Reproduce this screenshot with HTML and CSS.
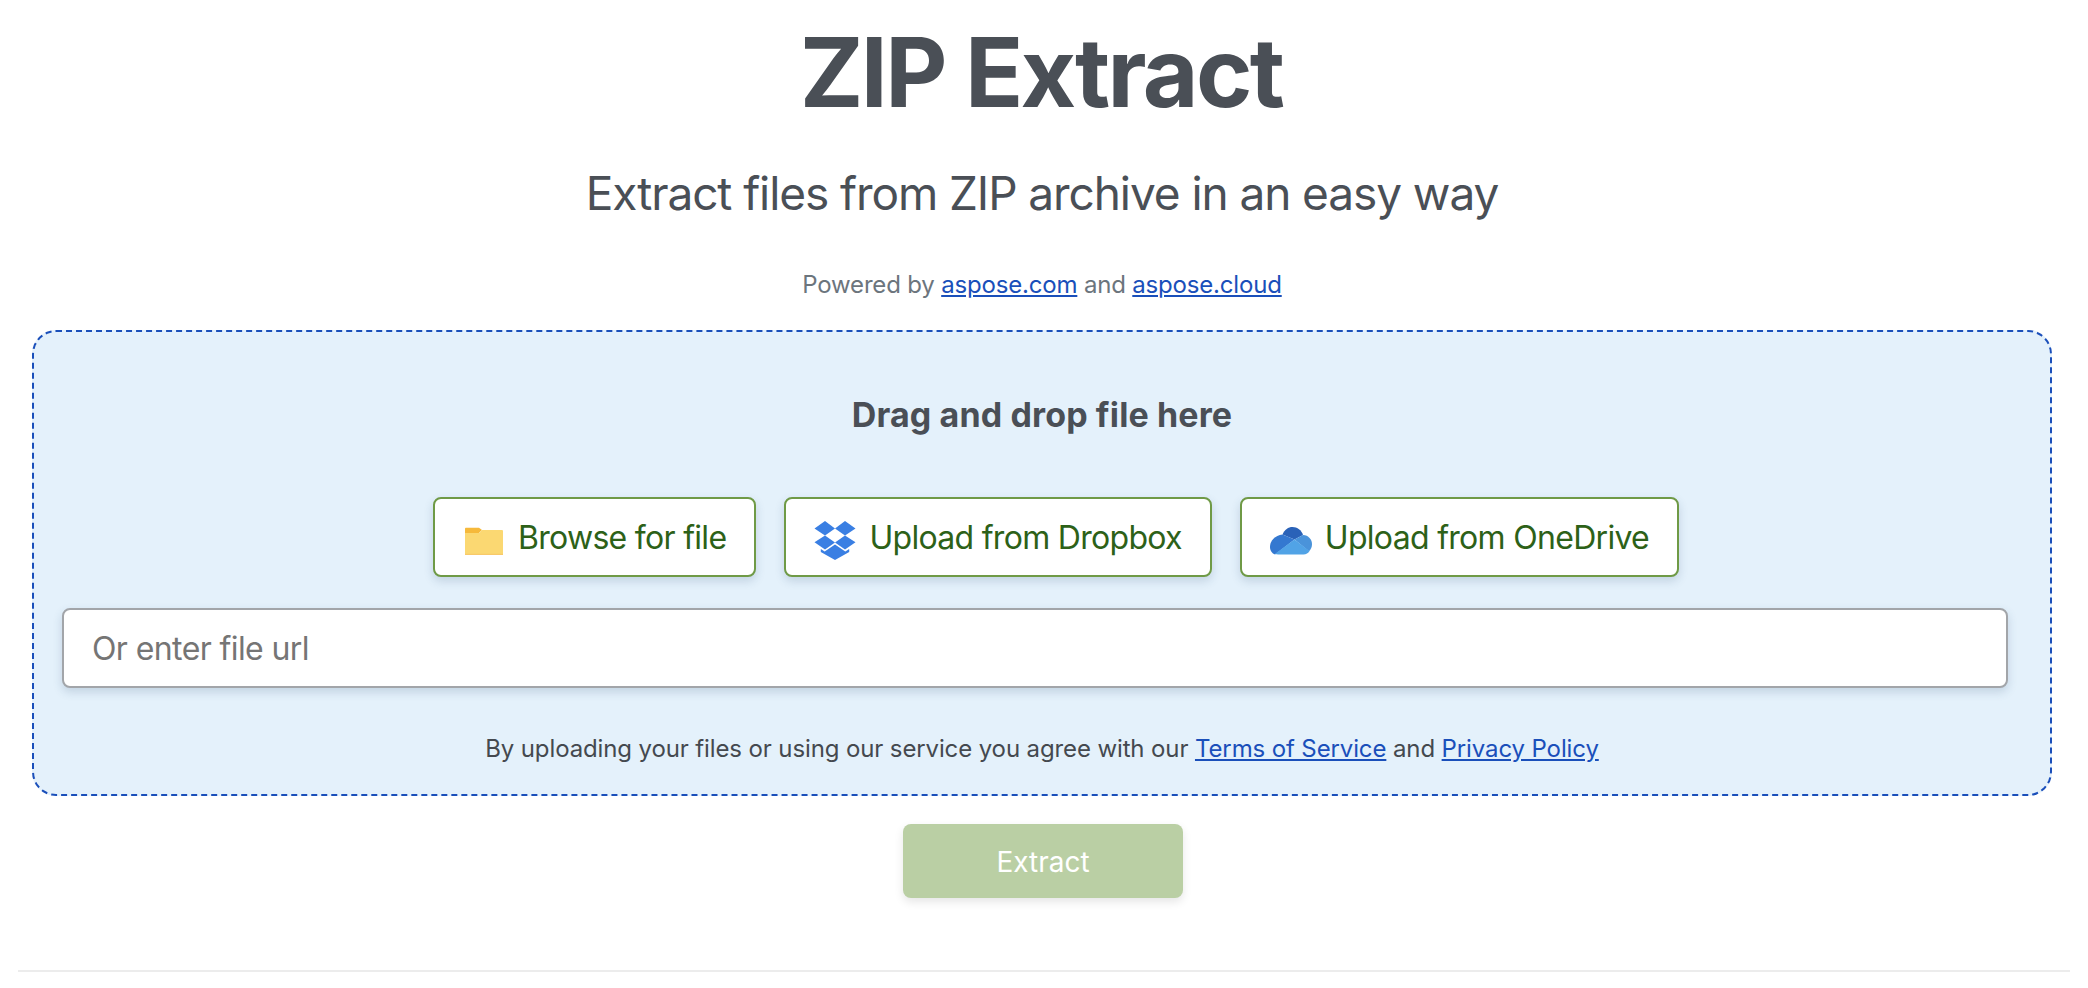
FILE: index.html
```html
<!DOCTYPE html>
<html lang="en">
<head>
<meta charset="utf-8">
<title>ZIP Extract</title>
<link rel="stylesheet" href="styles.css">
</head>
<body>
<main class="page">
  <header class="head">
    <h1 class="title">ZIP Extract</h1>
    <h2 class="subtitle">Extract files from ZIP archive in an easy way</h2>
    <p class="powered">Powered by <a href="#">aspose.com</a> and <a href="#">aspose.cloud</a></p>
  </header>
  <section class="drop">
    <h3 class="drop-title">Drag and drop file here</h3>
    <div class="sources">
      <button class="source" type="button">
        <svg class="icon" viewBox="0 -5 42 42" aria-hidden="true">
          <path fill="#f6b93b" d="M2 7.500a.8.8 0 0 1 .8-.8h13.200l3 2.300-3 3H2z"/>
          <path fill="#fbd872" d="M2 12h14.500l2.500-3h20a1 1 0 0 1 1 1v23H2z"/>
          <path fill="#f8c96a" d="M2 32.700h38v1.300H2z"/>
        </svg>
        <span>Browse for file</span>
      </button>
      <button class="source" type="button">
        <svg class="icon" viewBox="0 -3 42 42" aria-hidden="true">
          <path fill="#3a7fe3" d="M11 2 .5 9.400 11 16.400l10-7zM31 2 21 9.400l10 7 10.500-7zM.5 23.200 11 30.400l10-7-10-7zM31 16.400l-10 7 10 7 10.500-7.200zM21 25.400l-10.300 7.200-3.900-2.500v3L21 41l14.200-7.900v-3l-3.900 2.500z"/>
        </svg>
        <span>Upload from Dropbox</span>
      </button>
      <button class="source" type="button">
        <svg class="icon" viewBox="0 -4 42 42" aria-hidden="true">
          <path fill="#2a62b8" d="M12.500 14.500C14.500 9.600 18.300 7 22.500 7c4.800 0 9 3 10.500 8l-8.500 4.600-12-5.100z"/>
          <path fill="#3478d0" d="M0 27c0-6.500 5-11.500 12.500-12.500l12 5.100L5 34.500C2 33.500 0 30.500 0 27z"/>
          <path fill="#4a93da" d="M24.500 19.600 33 15c5.500.2 9 4.500 9 9 0 3-1 5.500-3 7.300z"/>
          <path fill="#51a3e6" d="M24.500 19.600 39.500 31c-1.300 2-3.300 3.500-6 3.500H9c-1.500 0-3-.2-4-.8z"/>
        </svg>
        <span>Upload from OneDrive</span>
      </button>
    </div>
    <input class="url" type="text" placeholder="Or enter file url">
    <p class="terms">By uploading your files or using our service you agree with our <a href="#">Terms of Service</a> and <a href="#">Privacy Policy</a></p>
  </section>
  <div class="action">
    <button class="extract" type="button">Extract</button>
  </div>
  <hr class="rule">
</main>
</body>
</html>
```

FILE: styles.css
```css
* { box-sizing: border-box; }
html, body { margin: 0; padding: 0; background: #fff; }
body { font-family: Inter, "Liberation Sans", sans-serif; color: #4a4f56; overflow: hidden; }
.page { padding: 0 36px 0 32px; height: 988px; }
.head { text-align: center; }
.title { margin: 0 2px 0 0; padding-top: 14px; font-size: 96px; line-height: 116px; font-weight: 700; letter-spacing: -2.6px; color: #4a4f56; }
.subtitle { margin: 35px 0 0; font-size: 46px; line-height: 56px; font-weight: 400; letter-spacing: -1.08px; color: #4a4f56; }
.powered { margin: 46px 0 0; font-size: 24px; line-height: 36px; letter-spacing: -.18px; color: #6c757d; }
a { color: #1a4fba; text-decoration: underline; }
.drop { margin-top: 27px; height: 466px; padding: 59px 28px 0; background: #e4f1fb; border: 2px dashed #1a4fba; border-radius: 24px; text-align: center; }
.drop-title { margin: 0; font-size: 34px; line-height: 48px; font-weight: 700; letter-spacing: .12px; color: #4a4f56; }
.sources { display: flex; justify-content: center; gap: 28px; margin: 58px -28px 0 0; }
.source { display: flex; align-items: center; gap: 13px; height: 80px; padding: 0 28px; background: #fff; border: 2px solid #6f9a46; border-radius: 8px; color: #2d6118; font: 400 32px Inter, sans-serif; letter-spacing: -.7px; box-shadow: 0 4px 10px rgba(40, 70, 110, .18); }
.icon { width: 42px; height: 42px; flex: none; overflow: visible; }
.url { display: block; width: calc(100% - 14px); height: 80px; margin-top: 31px; padding: 0 28px; background: #fff; border: 2px solid #a2a5a9; border-radius: 8px; font: 400 32px Inter, sans-serif; letter-spacing: -.6px; color: #333; box-shadow: 0 4px 10px rgba(40, 70, 110, .18); outline: none; }
.url::placeholder { color: #757575; opacity: 1; }
.terms { margin: 43px 0 0; font-size: 24px; line-height: 36px; letter-spacing: -.12px; color: #44494f; }
.action { display: flex; justify-content: center; margin: 28px 0 0 2px; }
.extract { width: 280px; height: 74px; padding: 2px 0 0; background: #bacfa4; border: 0; border-radius: 8px; color: #fff; font: 400 28px Inter, sans-serif; box-shadow: 0 4px 10px rgba(0, 0, 0, .1); }
.rule { margin: 72px -18px 0 -14px; height: 2px; border: 0; background: #ececec; }
```
